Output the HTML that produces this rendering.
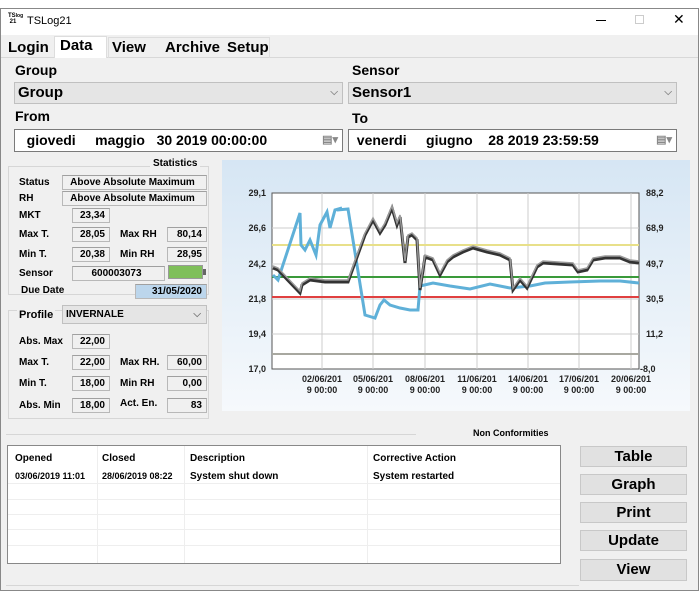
<!DOCTYPE html>
<html><head><meta charset="utf-8"><style>
*{box-sizing:border-box;margin:0;padding:0}
body{width:700px;height:600px;background:#fff;font-family:"Liberation Sans",Arial,sans-serif;position:relative;overflow:hidden;color:#000}
.a{position:absolute}
.b{font-weight:bold}
.win{left:0;top:8px;width:699px;height:583px;border:1px solid #888;background:#f0f0f0}
.f{position:absolute;background:#f0f0f0;border:1px solid #b8b8b8;border-top-color:#a0a0a0;font-weight:bold;font-size:10px;text-align:right;padding-right:4px;line-height:13px;height:15px}
.l{position:absolute;font-weight:bold;font-size:10px}
.grp{position:absolute;border:1px solid #d6d6d6;}
.btn{position:absolute;left:580px;width:107px;height:21px;background:#e1e1e1;border:1px solid #c8c8c8;font-weight:bold;font-size:15px;text-align:center;line-height:19px}
.combo{position:absolute;background:#e5e5e5;border:1px solid #c0c0c0;font-weight:bold;font-size:15px;padding-left:3px;line-height:20px;height:22px}
.date{position:absolute;background:#fff;border:1px solid #7a7a7a;font-weight:bold;font-size:14px;line-height:20px;height:23px;white-space:pre}
.th{position:absolute;font-size:10px;font-weight:bold}
</style></head><body>
<div class="a win"></div>
<div class="a" style="left:1px;top:9px;width:697px;height:26px;background:#fff"></div>
<div class="a" style="left:8px;top:13px;font-size:6px;line-height:6px;font-weight:bold">TS<span style="font-size:5px">log</span><br>&nbsp;21</div>
<div class="a" style="left:27px;top:15px;font-size:11px">TSLog21</div>
<div class="a" style="left:596px;top:20px;width:10px;height:1px;background:#000"></div>
<div class="a" style="left:635px;top:15px;width:9px;height:9px;border:1px solid #ccc"></div>
<div class="a" style="left:673px;top:11px;font-size:14px">✕</div>
<!-- tabs -->
<div class="a" style="left:1px;top:57px;width:697px;height:1px;background:#d8d8d8"></div>
<div class="a" style="left:54px;top:36px;width:53px;height:22px;background:#fff;border:1px solid #ddd;border-bottom:none"></div>
<div class="a b" style="left:8px;top:39px;font-size:15px">Login</div>
<div class="a b" style="left:60px;top:37px;font-size:15px">Data</div>
<div class="a b" style="left:112px;top:39px;font-size:15px">View</div>
<div class="a b" style="left:165px;top:39px;font-size:15px">Archive</div>
<div class="a b" style="left:227px;top:39px;font-size:15px">Setup</div>
<div class="a" style="left:108px;top:37px;width:162px;height:21px;border:1px solid #ddd;border-bottom:none"></div>
<div class="a b" style="left:15px;top:62px;font-size:14px">Group</div>
<div class="a b" style="left:352px;top:62px;font-size:14px">Sensor</div>
<div class="combo" style="left:14px;top:82px;width:329px">Group<span style="position:absolute;right:4px;color:#888;font-size:10px">⌵</span></div>
<div class="combo" style="left:348px;top:82px;width:329px">Sensor1<span style="position:absolute;right:4px;color:#888;font-size:10px">⌵</span></div>
<div class="a b" style="left:15px;top:108px;font-size:14px">From</div>
<div class="a b" style="left:352px;top:110px;font-size:14px">To</div>
<div class="date" style="left:14px;top:129px;width:329px">   giovedi     maggio   30 2019 00:00:00<span style="position:absolute;right:4px;top:0;color:#888;font-size:11px">▤▾</span></div>
<div class="date" style="left:348px;top:129px;width:329px">  venerdi     giugno    28 2019 23:59:59<span style="position:absolute;right:4px;top:0;color:#888;font-size:11px">▤▾</span></div>
<!-- statistics -->
<div class="grp" style="left:8px;top:166px;width:201px;height:129px"></div>
<div class="l" style="left:150px;top:158px;background:#f0f0f0;padding:0 3px">Statistics</div>
<div class="l" style="left:19px;top:177px">Status</div>
<div class="f" style="left:62px;top:175px;width:145px;text-align:center">Above Absolute Maximum</div>
<div class="l" style="left:19px;top:193px">RH</div>
<div class="f" style="left:62px;top:191px;width:145px;text-align:center">Above Absolute Maximum</div>
<div class="l" style="left:19px;top:210px">MKT</div>
<div class="f" style="left:72px;top:208px;width:38px">23,34</div>
<div class="l" style="left:19px;top:229px">Max T.</div>
<div class="f" style="left:72px;top:227px;width:38px">28,05</div>
<div class="l" style="left:120px;top:229px">Max RH</div>
<div class="f" style="left:167px;top:227px;width:40px">80,14</div>
<div class="l" style="left:19px;top:249px">Min T.</div>
<div class="f" style="left:72px;top:247px;width:38px">20,38</div>
<div class="l" style="left:120px;top:249px">Min RH</div>
<div class="f" style="left:167px;top:247px;width:40px">28,95</div>
<div class="l" style="left:19px;top:268px">Sensor</div>
<div class="f" style="left:72px;top:266px;width:93px;text-align:center">600003073</div>
<div class="a" style="left:168px;top:265px;width:35px;height:14px;background:#7fbf5a;border:1px solid #999"></div>
<div class="a" style="left:203px;top:269px;width:3px;height:6px;background:#666"></div>
<div class="l" style="left:21px;top:285px">Due Date</div>
<div class="f" style="left:135px;top:284px;width:72px;background:#bcd6ec">31/05/2020</div>
<!-- profile -->
<div class="grp" style="left:8px;top:310px;width:201px;height:109px"></div>
<div class="l" style="left:17px;top:309px;background:#f0f0f0;padding:0 2px;font-size:11px">Profile</div>
<div class="a" style="left:62px;top:305px;width:145px;height:19px;background:#e5e5e5;border:1px solid #c0c0c0;font-size:10px;font-weight:bold;line-height:17px;padding-left:3px">INVERNALE<span style="position:absolute;right:5px;color:#777">⌵</span></div>
<div class="l" style="left:19px;top:336px">Abs. Max</div>
<div class="f" style="left:72px;top:334px;width:38px">22,00</div>
<div class="l" style="left:19px;top:357px">Max T.</div>
<div class="f" style="left:72px;top:355px;width:38px">22,00</div>
<div class="l" style="left:120px;top:357px">Max RH.</div>
<div class="f" style="left:167px;top:355px;width:40px">60,00</div>
<div class="l" style="left:19px;top:378px">Min T.</div>
<div class="f" style="left:72px;top:376px;width:38px">18,00</div>
<div class="l" style="left:120px;top:378px">Min RH</div>
<div class="f" style="left:167px;top:376px;width:40px">0,00</div>
<div class="l" style="left:19px;top:400px">Abs. Min</div>
<div class="f" style="left:72px;top:398px;width:38px">18,00</div>
<div class="l" style="left:120px;top:398px">Act. En.</div>
<div class="f" style="left:167px;top:398px;width:40px">83</div>
<!-- chart -->
<svg class="a" style="left:222px;top:160px" width="468" height="251" viewBox="222 160 468 251">
<defs><linearGradient id="g" x1="0" y1="0" x2="0" y2="1"><stop offset="0" stop-color="#d6e6f4"/><stop offset="1" stop-color="#f6f9fc"/></linearGradient></defs>
<rect x="222" y="160" width="468" height="251" fill="url(#g)"/>
<rect x="272" y="193" width="367" height="176" fill="#fff" stroke="#555"/>
<g stroke="#ccc" stroke-width="1">
<line x1="272" y1="228" x2="639" y2="228"/><line x1="272" y1="264" x2="639" y2="264"/><line x1="272" y1="299" x2="639" y2="299"/><line x1="272" y1="334" x2="639" y2="334"/>
<line x1="322" y1="193" x2="322" y2="369"/><line x1="373" y1="193" x2="373" y2="369"/><line x1="425" y1="193" x2="425" y2="369"/><line x1="477" y1="193" x2="477" y2="369"/><line x1="528" y1="193" x2="528" y2="369"/><line x1="579" y1="193" x2="579" y2="369"/><line x1="631" y1="193" x2="631" y2="369"/>
</g>
<line x1="272" y1="245" x2="639" y2="245" stroke="#e8e08a" stroke-width="2"/>
<line x1="272" y1="277" x2="639" y2="277" stroke="#3a9a3a" stroke-width="2"/>
<line x1="272" y1="297" x2="639" y2="297" stroke="#e04040" stroke-width="2"/>
<line x1="272" y1="354" x2="639" y2="354" stroke="#a8a8a0" stroke-width="2"/>
<polyline fill="none" stroke="#5fb0d8" stroke-width="3" points="273,275 278,280 300,213 301,245 305,250 310,240 316,255 320,225 327,212 330,228 335,210 342,208 337,210 348,209 365,315 375,318 380,305 384,300 390,305 400,308 410,310 418,310 420,286 433,283 450,286 470,289 490,284 510,288 530,286 545,283 570,282 600,281 620,281 639,283"/>
<polyline fill="none" stroke="#333" stroke-width="3" points="273,268 278,270 300,293 302,285 310,280 325,282 348,282 365,235 373,220 380,233 385,225 392,208 397,225 400,217 405,263 408,237 412,235 417,240 420,290 425,257 433,260 440,275 447,262 453,257 463,252 473,248 480,250 487,252 500,255 510,260 513,290 520,280 527,288 537,267 543,263 558,264 573,265 578,272 587,270 593,260 605,258 620,258 630,262 639,263"/>
<polyline fill="none" stroke="#999" stroke-width="1.5" points="273,266 278,268 300,291 302,283 310,278 325,280 348,280 365,233 373,218 380,231 385,223 392,206 397,223 400,215 405,261 408,235 412,233 417,238 420,288 425,255 433,258 440,273 447,260 453,255 463,250 473,246 480,248 487,250 500,253 510,258 513,288 520,278 527,286 537,265 543,261 558,262 573,263 578,270 587,268 593,258 605,256 620,256 630,260 639,261"/>
<g font-family="Liberation Sans,Arial,sans-serif" font-size="9" font-weight="bold" fill="#222">
<text x="266" y="196" text-anchor="end">29,1</text><text x="266" y="231" text-anchor="end">26,6</text><text x="266" y="267" text-anchor="end">24,2</text><text x="266" y="302" text-anchor="end">21,8</text><text x="266" y="337" text-anchor="end">19,4</text><text x="266" y="372" text-anchor="end">17,0</text>
<text x="646" y="196">88,2</text><text x="646" y="231">68,9</text><text x="646" y="267">49,7</text><text x="646" y="302">30,5</text><text x="646" y="337">11,2</text><text x="640" y="372">-8,0</text>
<g text-anchor="middle">
<text x="322" y="382">02/06/201</text><text x="322" y="393">9 00:00</text>
<text x="373" y="382">05/06/201</text><text x="373" y="393">9 00:00</text>
<text x="425" y="382">08/06/201</text><text x="425" y="393">9 00:00</text>
<text x="477" y="382">11/06/201</text><text x="477" y="393">9 00:00</text>
<text x="528" y="382">14/06/201</text><text x="528" y="393">9 00:00</text>
<text x="579" y="382">17/06/201</text><text x="579" y="393">9 00:00</text>
<text x="631" y="382">20/06/201</text><text x="631" y="393">9 00:00</text>
</g></g>
</svg>
<!-- non conformities -->
<div class="a" style="left:6px;top:434px;width:410px;height:1px;background:#d6d6d6"></div>
<div class="l" style="left:473px;top:428px;font-size:9px">Non Conformities</div>
<div class="a" style="left:7px;top:445px;width:554px;height:119px;background:#fff;border:1px solid #888"></div>
<div class="a" style="left:8px;top:483px;width:552px;height:1px;background:#eee"></div>
<div class="a" style="left:8px;top:499px;width:552px;height:1px;background:#eee"></div>
<div class="a" style="left:8px;top:514px;width:552px;height:1px;background:#eee"></div>
<div class="a" style="left:8px;top:529px;width:552px;height:1px;background:#eee"></div>
<div class="a" style="left:8px;top:545px;width:552px;height:1px;background:#eee"></div>
<div class="a" style="left:97px;top:446px;width:1px;height:117px;background:#eee"></div>
<div class="a" style="left:184px;top:446px;width:1px;height:117px;background:#eee"></div>
<div class="a" style="left:367px;top:446px;width:1px;height:117px;background:#eee"></div>
<div class="th" style="left:15px;top:453px">Opened</div>
<div class="th" style="left:102px;top:453px">Closed</div>
<div class="th" style="left:190px;top:453px">Description</div>
<div class="th" style="left:373px;top:453px">Corrective Action</div>
<div class="th" style="left:15px;top:471px;font-size:9px">03/06/2019 11:01</div>
<div class="th" style="left:102px;top:471px;font-size:9px">28/06/2019 08:22</div>
<div class="th" style="left:190px;top:471px">System shut down</div>
<div class="th" style="left:373px;top:471px">System restarted</div>
<div class="a" style="left:6px;top:585px;width:573px;height:1px;background:#d6d6d6"></div>
<div class="btn" style="top:446px">Table</div>
<div class="btn" style="top:474px">Graph</div>
<div class="btn" style="top:502px">Print</div>
<div class="btn" style="top:530px">Update</div>
<div class="btn" style="top:559px;height:22px">View</div>
</body></html>
